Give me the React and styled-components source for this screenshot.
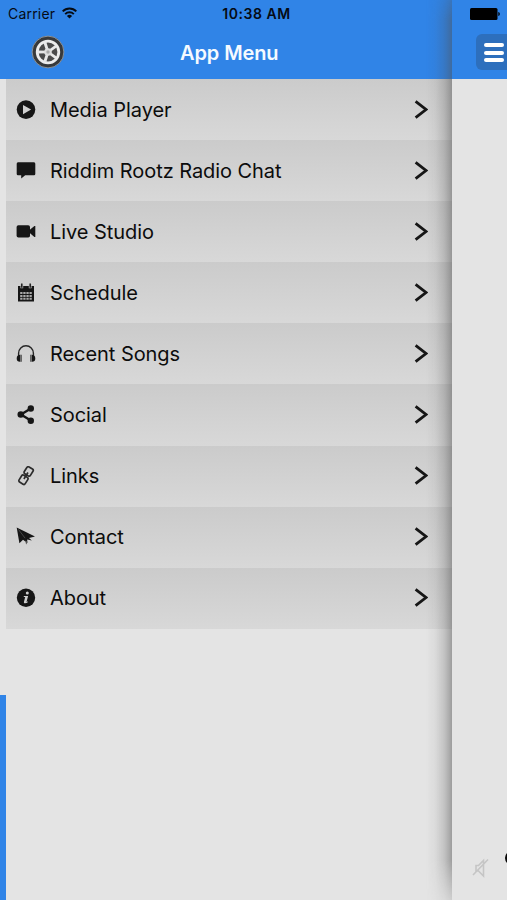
import styled, { createGlobalStyle } from "styled-components";

const GlobalStyle = createGlobalStyle`
  * {
    box-sizing: border-box;
  }

  body {
    margin: 0;
    background: #e4e4e4;
    font-family: Inter, "Liberation Sans", sans-serif;
  }
`;

const ink = "#161616";

const PlayIcon = () => (
  <Icon viewBox="0 0 20 20">
    <circle cx="10" cy="9.6" r="9.3" />
    <path d="M7 5l8.1 4.6L7 14.2z" fill="#d0d0d0" />
  </Icon>
);

const ChatIcon = () => (
  <Icon viewBox="0 0 20 20">
    <path d="M2 1.3h16a1.4 1.4 0 011.3 1.4v10.2a1.4 1.4 0 01-1.3 1.4H9.2L5.2 17.6v-3.3H2a1.4 1.4 0 01-1.3-1.4V2.7A1.4 1.4 0 012 1.3z" />
  </Icon>
);

const VideoIcon = () => (
  <Icon viewBox="0 0 20 20">
    <rect x="0.6" y="3.3" width="13.4" height="12.2" rx="1.8" />
    <path d="M13.2 8.3l5.2-4.4h.9v11h-.9l-5.2-4.4z" />
  </Icon>
);

const CalendarIcon = () => (
  <Icon viewBox="0 0 20 20">
    <path d="M2 3h16v15.5H2z" />
    <path
      d="M4.2 9h2.3v2H4.2zm3.1 0h2.3v2H7.3zm3.1 0h2.3v2h-2.3zm3.1 0h2.3v2h-2.3zM4.2 11.9h2.3v2H4.2zm3.1 0h2.3v2H7.3zm3.1 0h2.3v2h-2.3zm3.1 0h2.3v2h-2.3zM4.2 14.8h2.3v2H4.2zm3.1 0h2.3v2H7.3zm3.1 0h2.3v2h-2.3zm3.1 0h2.3v2h-2.3z"
      fill="#a8a8a8"
    />
    <path d="M5.8 1v4.3M14.2 1v4.3" stroke="#bdbdbd" strokeWidth="2.8" />
    <path d="M5.8 .5v4.3M14.2 .5v4.3" stroke={ink} strokeWidth="1.4" />
  </Icon>
);

const HeadphonesIcon = () => (
  <Icon viewBox="0 0 20 20">
    <path
      d="M2.6 13.5V9.2a7.4 7.4 0 0114.8 0v4.3"
      fill="none"
      stroke="#262626"
      strokeWidth="1.4"
    />
    <path d="M4.4 10.8v6.9C2 17.9.7 16.6.7 14.4s1.3-3.6 3.7-3.6zM15.6 10.8v6.9c2.4.2 3.7-1.1 3.7-3.3s-1.3-3.6-3.7-3.6z" />
    <path d="M4.4 10.8H6v6.9H4.4zM14 10.8h1.6v6.9H14z" fill="#666" />
  </Icon>
);

const ShareIcon = () => (
  <Icon viewBox="0 0 20 20">
    <path
      d="M14.8 3.5L5 9.5l9.8 6"
      fill="none"
      stroke={ink}
      strokeWidth="2.4"
    />
    <circle cx="14.8" cy="3.5" r="3.2" />
    <circle cx="4.8" cy="9.5" r="3.3" />
    <circle cx="14.8" cy="15.7" r="3.2" />
  </Icon>
);

const LinkIcon = () => (
  <Icon viewBox="0 0 20 20">
    <g
      transform="rotate(32 10 10)"
      fill="none"
      stroke="#2c2c2c"
      strokeWidth="1.7"
    >
      <rect x="6.2" y="0.7" width="7.2" height="8" rx="1.6" />
      <rect x="6.2" y="10.5" width="7.2" height="8" rx="1.6" />
      <path d="M9.8 6v7.6" />
    </g>
  </Icon>
);

const PlaneIcon = () => (
  <Icon viewBox="0 0 20 20">
    <path d="M.7.6l18.3 8.9-6 1.4 2.8 2.7-4.6-1.100.1 2.800-2.300-1-2-1.500-3.600 3.400z" />
    <path d="M2.5 2.5l6.600 8.700" stroke="#777" strokeWidth=".5" />
    <path d="M9.200 13.500l.9 4.100 1.700-2.500z" fill="#555" />
  </Icon>
);

const InfoIcon = () => (
  <Icon viewBox="0 0 20 20">
    <circle cx="10" cy="9.8" r="9.2" />
    <g fill="#cfcfcf">
      <circle cx="11.3" cy="5" r="1.5" />
      <path d="M8 7.9h4.1l-1.6 6 1.4-.6-.3 1.1c-1.5 1-4 1.4-3.7-.4l1.3-5.1H7.6z" />
    </g>
  </Icon>
);

const items = [
  { label: "Media Player", icon: PlayIcon },
  { label: "Riddim Rootz Radio Chat", icon: ChatIcon },
  { label: "Live Studio", icon: VideoIcon },
  { label: "Schedule", icon: CalendarIcon },
  { label: "Recent Songs", icon: HeadphonesIcon },
  { label: "Social", icon: ShareIcon },
  { label: "Links", icon: LinkIcon },
  { label: "Contact", icon: PlaneIcon },
  { label: "About", icon: InfoIcon },
];

const spokes = [-18, 54, 126, 198, 270];

const Wheel = () => (
  <WheelButton aria-label="Settings">
    <svg width="34" height="34" viewBox="0 0 34 34">
      <circle cx="17" cy="17" r="15.9" fill="#37393b" stroke="#8b9299" />
      <circle
        cx="17"
        cy="17"
        r="10.8"
        fill="#4b4b4b"
        stroke="#ececec"
        strokeWidth="2.8"
      />
      {spokes.map((angle) => (
        <path
          key={angle}
          d="M15.7 17l-.2-10h3l-.2 10z"
          fill="#e8e8e8"
          transform={`rotate(${angle} 17 17)`}
        />
      ))}
      <circle cx="17" cy="17" r="3.8" fill="#dedede" />
      <circle cx="17" cy="17" r="1.7" fill="#aaa" />
    </svg>
  </WheelButton>
);

const App = () => {
  return (
    <Screen>
      <GlobalStyle />
      <StatusBar>
        <Carrier>
          Carrier
          <svg width="15" height="12" viewBox="0 0 15 12">
            <g fill="none" stroke="#050b14" strokeWidth="2">
              <path d="M.7 4.4a9.6 9.6 0 0113.6 0" />
              <path d="M3.2 7.1a6.1 6.1 0 018.6 0" />
            </g>
            <path d="M4.9 9a3.7 3.7 0 015.2 0l-2.6 2.6z" fill="#050b14" />
          </svg>
        </Carrier>
        <Time>10:38 AM</Time>
        <svg width="31" height="12" viewBox="0 0 31 12">
          <rect width="27.5" height="12" rx="1.5" />
          <path d="M28.3 4c2 .2 2 3.8 0 4z" />
        </svg>
      </StatusBar>
      <Drawer>
        <DrawerHeader>
          <Wheel />
          <Title>App Menu</Title>
        </DrawerHeader>
        <DrawerBody>
          <Edge>
            <EdgeAccent />
          </Edge>
          <Menu>
            {items.map(({ label, icon: ItemIcon }) => (
              <MenuItem key={label}>
                <ItemIcon />
                <Label>{label}</Label>
                <svg width="14" height="20" viewBox="0 0 14 20">
                  <path
                    d="M1.6 1.3L12 9.5 1.6 17.7"
                    fill="none"
                    stroke={ink}
                    strokeWidth="2.8"
                  />
                </svg>
              </MenuItem>
            ))}
          </Menu>
        </DrawerBody>
        <Shade />
      </Drawer>
      <Page>
        <PageHeader>
          <MenuButton aria-label="Toggle menu">
            <Bar />
            <Bar />
            <Bar />
          </MenuButton>
        </PageHeader>
        <PageFooter>
          <svg width="18" height="20" viewBox="0 0 18 20">
            <path
              d="M1 17L16 1.5M4 7.5v5.5h2.500l5 5V2.500L6.500 7.500z"
              fill="none"
              stroke="#c5c5c5"
              strokeWidth="1.6"
            />
          </svg>
          <Knob />
        </PageFooter>
      </Page>
    </Screen>
  );
};

const Screen = styled.div`
  position: relative;
  display: grid;
  grid-template-columns: 452px 1fr;
  width: 507px;
  height: 900px;
  overflow: hidden;
  background: #e4e4e4;
`;

/* floats above both the drawer and the page */
const StatusBar = styled.div`
  position: absolute;
  top: 0;
  left: 0;
  right: 0;
  z-index: 2;
  display: grid;
  grid-template-columns: 1fr auto 1fr;
  align-items: center;
  height: 27px;
  padding: 0 6px 0 8px;
  color: #050b14;

  & > svg {
    justify-self: end;
  }
`;

const Carrier = styled.div`
  display: flex;
  align-items: center;
  gap: 7px;
  font-size: 14px;
  letter-spacing: 0.2px;

  svg {
    margin-top: -2px;
  }
`;

const Time = styled.div`
  margin-left: 4px;
  font-size: 14px;
  font-weight: 600;
  letter-spacing: 0.55px;
`;

const Drawer = styled.div`
  position: relative;
  display: flex;
  flex-direction: column;
`;

const DrawerHeader = styled.header`
  display: grid;
  grid-template-columns: 31px 36px 1fr;
  align-items: center;
  height: 79px;
  padding-top: 26px;
  background: #3084e7;
`;

const WheelButton = styled.button`
  grid-column: 2;
  display: flex;
  margin-top: -1px;
  padding: 0;
  border: 0;
  background: transparent;
`;

const Title = styled.h1`
  margin: 0 0 0 113px;
  font-size: 20px;
  font-weight: 600;
  letter-spacing: -0.1px;
  color: #f5faff;
`;

const DrawerBody = styled.div`
  display: flex;
  flex: 1;
`;

const Edge = styled.div`
  display: flex;
  flex-direction: column;
  justify-content: flex-end;
  width: 6px;
`;

const EdgeAccent = styled.div`
  height: 205px;
  background: #3084e7;
`;

const Menu = styled.ul`
  flex: 1;
  margin: 0;
  padding: 0;
  list-style: none;
`;

const MenuItem = styled.li`
  display: flex;
  align-items: center;
  height: 61.1px;
  padding: 0 24px 0 10px;
  background: linear-gradient(#cbcbcb, #d8d8d8);
`;

const Icon = styled.svg`
  width: 20px;
  height: 20px;
  fill: ${ink};
`;

const Label = styled.span`
  flex: 1;
  margin-left: 14px;
  font-size: 20px;
  letter-spacing: -0.06px;
  color: #0c0c0c;
`;

/* shadow the page casts on the drawer */
const Shade = styled.div`
  position: absolute;
  top: 0;
  right: 0;
  bottom: 0;
  width: 26px;
  background: linear-gradient(
    to right,
    transparent,
    rgba(80, 80, 80, 0.06) 35%,
    rgba(80, 80, 80, 0.22) 70%,
    rgba(80, 80, 80, 0.48)
  );
  mask-image: linear-gradient(
    rgba(0, 0, 0, 0.6),
    #000 20px,
    #000 860px,
    rgba(0, 0, 0, 0.3)
  );
`;

const Page = styled.main`
  display: flex;
  flex-direction: column;
  justify-content: space-between;
  overflow: hidden;
  background: #e4e4e4;
`;

const PageHeader = styled.header`
  height: 79px;
  padding: 34px 0 0 24px;
  background: #3084e7;
`;

const MenuButton = styled.button`
  display: flex;
  flex-direction: column;
  justify-content: center;
  gap: 3.5px;
  width: 36px;
  height: 36px;
  padding: 1px 0 0 8px;
  border: 0;
  border-radius: 6px;
  background: #2d6fbd;
`;

const Bar = styled.span`
  width: 20px;
  height: 4px;
  border-radius: 2px;
  background: #fff;
`;

const PageFooter = styled.footer`
  display: flex;
  align-items: flex-start;
  justify-content: space-between;
  width: 67px;
  height: 50px;
  padding-left: 20px;

  svg {
    margin-top: 8px;
  }
`;

const Knob = styled.span`
  width: 14px;
  height: 14px;
  margin-top: 1px;
  border-radius: 50%;
  background: #080808;
`;

export default App;
